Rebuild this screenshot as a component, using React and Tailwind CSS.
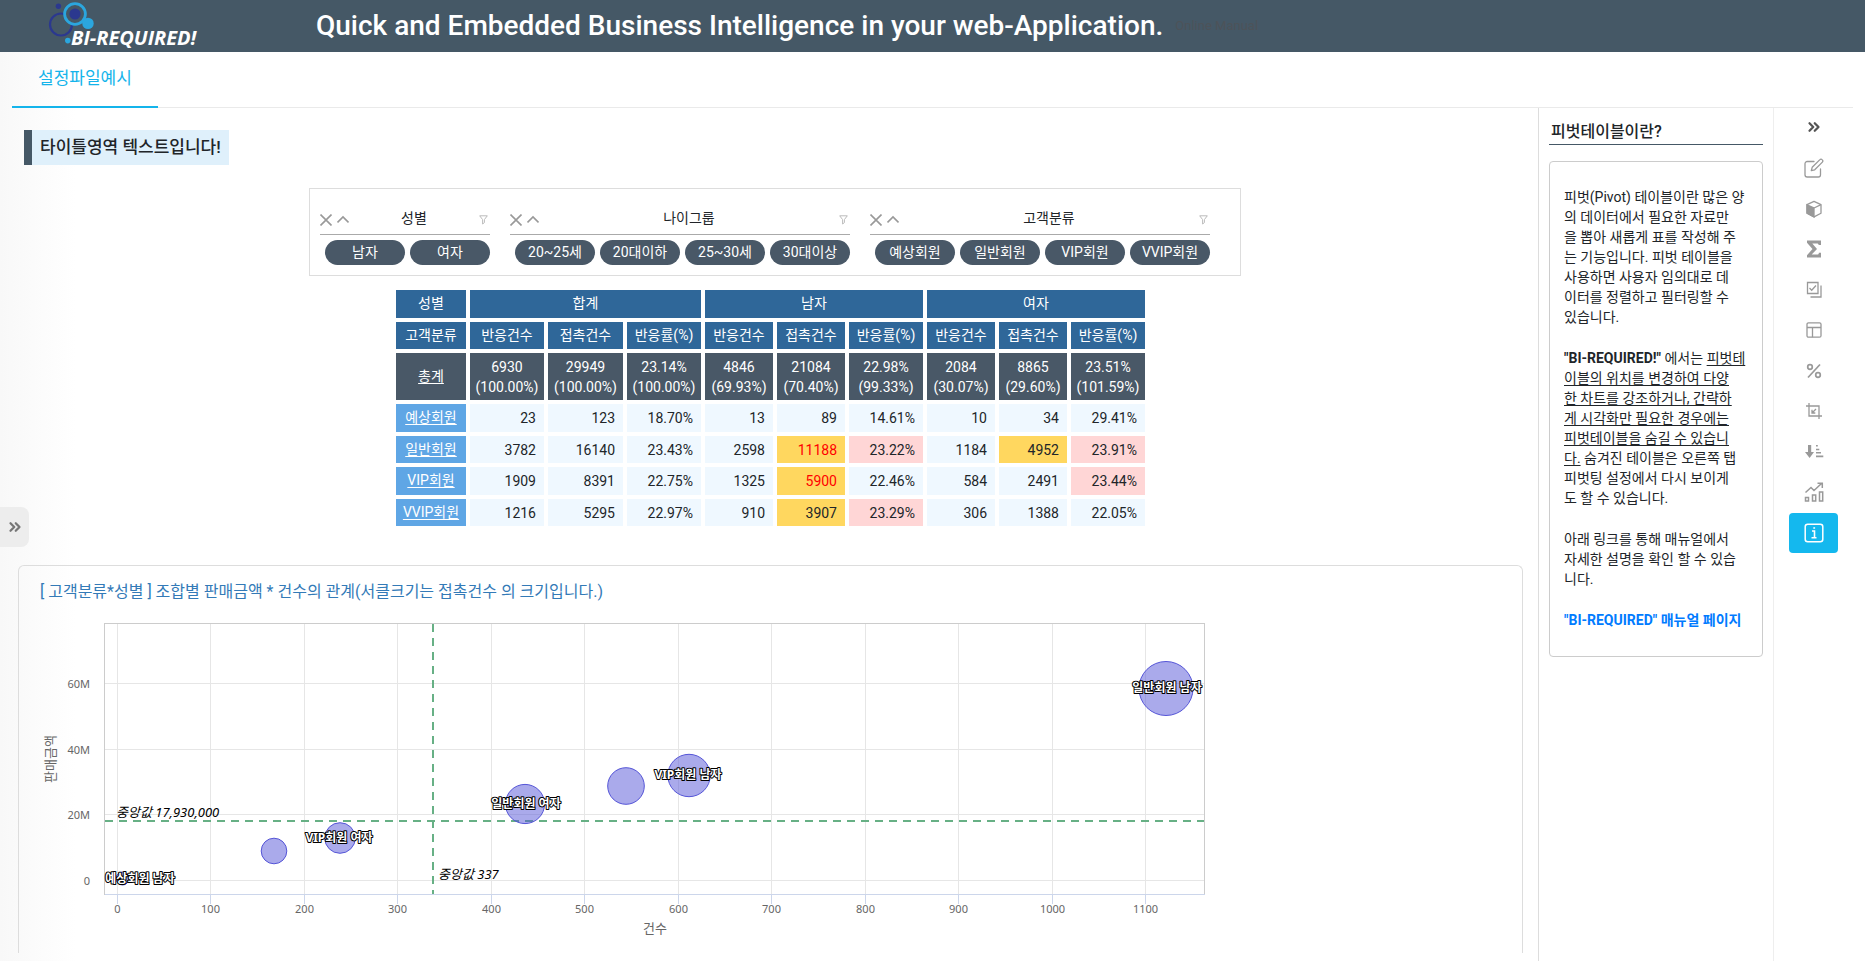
import React from "react";
import { ChevronsRight } from "lucide-react";

const FONT = "font-[Roboto,'Noto_Sans_CJK_KR',sans-serif]";

function Logo() {
  return (
    <svg width="160" height="52" viewBox="40 0 160 52" role="img" aria-label="BI-REQUIRED!">
      <circle cx="61" cy="24.5" r="11" fill="none" stroke="#2b388f" strokeWidth="2.2" />
      <circle cx="75" cy="14" r="10.4" fill="#455866" stroke="#2ba6de" strokeWidth="2.8" />
      <circle cx="75" cy="14" r="5.6" fill="#2b388f" />
      <circle cx="58.4" cy="6.2" r="2.7" fill="#2b388f" />
      <circle cx="88" cy="23.4" r="5.7" fill="#2ba6de" />
      <circle cx="67.8" cy="40.6" r="2.8" fill="#2ba6de" />
      <text x="71" y="45" fontSize="20" fontWeight="700" fontStyle="italic" fill="#fff" className="font-['Open_Sans',sans-serif]">
        BI-REQUIRED!
      </text>
    </svg>
  );
}

const FILTERS = [
  { name: "성별", items: ["남자", "여자"] },
  { name: "나이그룹", items: ["20~25세", "20대이하", "25~30세", "30대이상"] },
  { name: "고객분류", items: ["예상회원", "일반회원", "VIP회원", "VVIP회원"] },
];

function FilterGroup({ name, items }) {
  return (
    <div>
      <div className="flex h-[30px] items-center border-b border-[#aaa] pb-1">
        <div className="mt-1 flex w-[29px] shrink-0 justify-between text-[#999]">
          <button type="button" aria-label={`${name} 삭제`}>
            <svg width="12" height="12" viewBox="0 0 12 12" fill="none" stroke="currentColor" strokeWidth="1.6">
              <path d="M0.5 0.5l11 11M11.500 0.500l-11 11" />
            </svg>
          </button>
          <button type="button" aria-label={`${name} 접기`}>
            <svg width="12" height="12" viewBox="0 0 12 12" fill="none" stroke="currentColor" strokeWidth="1.6">
              <path d="M0.5 8.500 6 3l5.500 5.500" />
            </svg>
          </button>
        </div>
        <span className="flex-1 text-center text-[14px] leading-4 text-[#212529]">{name}</span>
        <button type="button" aria-label={`${name} 필터`} className="mt-1 mr-0.5 text-[#bbb]">
          <svg width="9" height="10" viewBox="0 0 9 10" fill="none" stroke="currentColor">
            <path d="M0.7 0.8h7.6L5.400 4.600v3L3.600 9V4.600z" />
          </svg>
        </button>
      </div>
      <div className="mt-[5px] flex gap-[5px] pl-[5px]">
        {items.map((t) => (
          <button key={t} type="button" className="h-[25px] w-20 rounded-full bg-[#495867] text-[14px] leading-[25px] text-white">
            {t}
          </button>
        ))}
      </div>
    </div>
  );
}

const METRICS = ["반응건수", "접촉건수", "반응률(%)"];
const TOTALS = [
  ["6930", "(100.00%)"], ["29949", "(100.00%)"], ["23.14%", "(100.00%)"],
  ["4846", "(69.93%)"], ["21084", "(70.40%)"], ["22.98%", "(99.33%)"],
  ["2084", "(30.07%)"], ["8865", "(29.60%)"], ["23.51%", "(101.59%)"],
];
const P = "bg-[#ffd6d6]";
const Y = "bg-[#ffd75f]";
const R = "bg-[#ffd75f] text-[#ff0000]";
const N = "bg-[#eff8ff]";
const ROWS = [
  { name: "예상회원", v: ["23", "123", "18.70%", "13", "89", "14.61%", "10", "34", "29.41%"], s: [N, N, N, N, N, N, N, N, N] },
  { name: "일반회원", v: ["3782", "16140", "23.43%", "2598", "11188", "23.22%", "1184", "4952", "23.91%"], s: [N, N, N, N, R, P, N, Y, P] },
  { name: "VIP회원", v: ["1909", "8391", "22.75%", "1325", "5900", "22.46%", "584", "2491", "23.44%"], s: [N, N, N, N, R, N, N, N, P] },
  { name: "VVIP회원", v: ["1216", "5295", "22.97%", "910", "3907", "23.29%", "306", "1388", "22.05%"], s: [N, N, N, N, Y, P, N, N, N] },
];

function PivotTable() {
  return (
    <table className="w-[757px] table-fixed border-separate border-spacing-1 text-[14px] leading-5">
      <colgroup>
        <col className="w-[70px]" />
        <col className="w-[74px]" />
        <col className="w-[75px]" />
        <col className="w-[74px]" />
        <col className="w-[68px]" />
        <col className="w-[68px]" />
        <col className="w-[74px]" />
        <col className="w-[68px]" />
        <col className="w-[68px]" />
        <col className="w-[74px]" />
      </colgroup>
      <thead className="text-white">
        <tr className="h-7">
          <th scope="col" className="bg-[#2f6799] p-0 pb-0.5 font-normal">성별</th>
          {["합계", "남자", "여자"].map((g) => (
            <th key={g} scope="colgroup" colSpan={3} className="bg-[#2f6799] p-0 pb-0.5 font-normal">{g}</th>
          ))}
        </tr>
        <tr className="h-[27px]">
          <th scope="col" className="bg-[#2f6799] p-0 pb-0.5 font-normal">고객분류</th>
          {[0, 1, 2].flatMap((g) =>
            METRICS.map((m) => (
              <th key={g + m} scope="col" className="bg-[#2f6799] p-0 pb-0.5 font-normal whitespace-nowrap">{m}</th>
            ))
          )}
        </tr>
      </thead>
      <tbody>
        <tr className="h-[47px] text-white">
          <th scope="row" className="bg-[#495867] p-0 pb-0.5 font-normal">
            <a href="#total" className="underline underline-offset-2">총계</a>
          </th>
          {TOTALS.map(([a, b], i) => (
            <td key={i} className="bg-[#495867] p-0 text-center">
              {a}
              <br />
              {b}
            </td>
          ))}
        </tr>
        {ROWS.map((r) => (
          <tr key={r.name} className="odd:h-[27px] even:h-7">
            <th scope="row" className="bg-[#5fa6e5] p-0 pb-0.5 font-normal text-white">
              <a href="#row" className="underline underline-offset-2">{r.name}</a>
            </th>
            {r.v.map((v, i) => (
              <td key={i} className={`p-0 pr-2 text-right text-[#212529] ${r.s[i]}`}>{v}</td>
            ))}
          </tr>
        ))}
      </tbody>
    </table>
  );
}

const BUBBLES = [
  { x: 122.5, y: 878.5, r: 6.5, t: "예상회원 남자", tx: 140, ty: 883 },
  { x: 274, y: 851, r: 12.8 },
  { x: 340, y: 838, r: 15.3, t: "VIP회원 여자", tx: 339, ty: 842 },
  { x: 525, y: 804, r: 19.6, t: "일반회원 여자", tx: 526, ty: 808 },
  { x: 626, y: 786, r: 18.3 },
  { x: 689, y: 775.5, r: 21.2, t: "VIP회원 남자", tx: 688, ty: 779 },
  { x: 1166, y: 688.5, r: 27, t: "일반회원 남자", tx: 1167, ty: 692 },
];
const XT = [
  [0, 117.5], [100, 210.5], [200, 304.5], [300, 397.5], [400, 491.5], [500, 584.5],
  [600, 678.5], [700, 771.5], [800, 865.5], [900, 958.5], [1000, 1052.5], [1100, 1145.5],
];
const YT = [["60M", 683.5], ["40M", 749.5], ["20M", 814.5], ["0", 880.5]];

function BubbleChart() {
  return (
    <svg width="1190" height="330" viewBox="40 610 1190 330" className="block font-['Noto_Sans','Noto_Sans_CJK_KR',sans-serif]" role="img" aria-label="고객분류와 성별 조합별 판매금액과 건수의 관계">
      <g stroke="#e6e6e6">
        {XT.map(([v, x]) => <line key={v} x1={x} x2={x} y1="624" y2="894" />)}
        {YT.map(([v, y]) => <line key={v} x1="105" x2="1204" y1={y} y2={y} />)}
      </g>
      <rect x="104.5" y="623.5" width="1100" height="271" fill="none" stroke="#ccc" />
      <g stroke="#ccd6eb">
        <line x1="105" x2="1205" y1="894.5" y2="894.5" />
        {XT.map(([v, x]) => <line key={v} x1={x} x2={x} y1="894" y2="904" />)}
      </g>
      <g stroke="#67b085" strokeWidth="2" strokeDasharray="8 6">
        <line x1="433" x2="433" y1="624" y2="894" />
        <line x1="105" x2="1204" y1="821" y2="821" />
      </g>
      <g fill="#5555d7" fillOpacity="0.5" stroke="#5555d7" strokeWidth="1">
        {BUBBLES.map((b) => <circle key={b.x} cx={b.x} cy={b.y} r={b.r} />)}
      </g>
      <g fontSize="13" fontStyle="italic" fill="#000">
        <text x="116" y="817">중앙값 17,930,000</text>
        <text x="438" y="879">중앙값 337</text>
      </g>
      <g fontSize="12" fontWeight="700" textAnchor="middle" fill="#fff" stroke="#000" strokeWidth="2" strokeLinejoin="round" paintOrder="stroke">
        {BUBBLES.filter((b) => b.t).map((b) => <text key={b.t} x={b.tx} y={b.ty}>{b.t}</text>)}
      </g>
      <g fontSize="11" fill="#666">
        {XT.map(([v, x]) => <text key={v} x={x} y="913" textAnchor="middle">{v}</text>)}
        {YT.map(([v, y]) => <text key={v} x="90" y={y + 4} textAnchor="end">{v}</text>)}
      </g>
      <g fontSize="13" fill="#666" textAnchor="middle">
        <text x="655" y="933">건수</text>
        <text transform="translate(55 759) rotate(-90)">판매금액</text>
      </g>
    </svg>
  );
}

const S = { width: 20, height: 20, viewBox: "0 0 20 20", fill: "none", stroke: "currentColor", strokeWidth: 1.3 };
const TOOLS = [
  { label: "편집", icon: <svg {...S} strokeLinejoin="round" strokeLinecap="round"><path d="M10 3.500H3.200A2.200 2.200 0 0 0 1 5.700v11.100A2.200 2.200 0 0 0 3.200 19h11.100a2.200 2.200 0 0 0 2.200-2.200V11M8.200 9.300l-.9 3.400 3.400-.9 7.700-7.700a1.500 1.500 0 0 0 0-2.200l-.3-.3a1.500 1.500 0 0 0-2.200 0z" /></svg> },
  { label: "큐브", icon: <svg {...S}><path d="M10 2.300 17 5.600v8.600L10 17.900 3 14.200V5.600z" strokeLinejoin="round" /><path d="M3 5.800 10 9v8.900l-7-3.700z" fill="currentColor" /><path d="M10 9l7-3.300" /></svg> },
  { label: "합계", icon: <svg {...S} stroke="none" fill="currentColor"><path d="M3 1.500h14v4.600h-2.400c0-1-.6-1.500-1.600-1.500H8.300L13 10l-5.300 5.600H13c1.200 0 1.900-.6 1.900-1.900H17v4.800H3v-2.200l5.500-6.400L3 3.800z" /></svg> },
  { label: "선택", icon: <svg {...S}><path d="M3.500 2.500h10.500v11H3.500zM17 5.500v11.500H6.500" /><path d="M5.500 8l2.200 2.300 4.300-4.800" /></svg> },
  { label: "레이아웃", icon: <svg {...S}><rect x="3" y="2.800" width="14" height="14.400" rx="1.500" /><path d="M3 7.500h14M8.500 7.500v9.700" /></svg> },
  { label: "비율", icon: <svg {...S} strokeWidth="1.700"><circle cx="6" cy="6" r="2.300" /><circle cx="14" cy="14" r="2.300" /><path d="M16 3.500 4 16.500" /></svg> },
  { label: "자르기", icon: <svg {...S}><path d="M5 2v13h13M2 5h13v13" /><path d="M12 8l-4 4M8 8.800V12h3.300" /></svg> },
  { label: "정렬", icon: <svg {...S} stroke="none" fill="currentColor"><path d="M4 3h3.200v7H10L5.600 16 1 10h3zM12 3h1.800v1.600H12zM12 6.700h3.300v1.600H12zM12 10h5v1.600h-5zM12 13.500h7.300v1.700H12z" /></svg> },
  { label: "차트", icon: <svg {...S} strokeWidth="1.500"><path d="M1.500 15.500h3v3.500h-3zM8.500 13h3.200v6H8.500zM15.500 10h3.200v9h-3.200zM1.500 10.500l5.500-5 3 3 7.500-7M13.500 1.200h4.800V6" /></svg> },
];

function Info() {
  return (
    <div className="mt-4 flex flex-col gap-[21px] rounded-sm border border-[#ccc] px-3.5 pt-[25px] pb-[26px] text-[14px] leading-5 whitespace-nowrap text-[#212529]">
      <p>
        피벗(Pivot) 테이블이란 많은 양<br />의 데이터에서 필요한 자료만<br />을 뽑아 새롭게 표를 작성해 주<br />는 기능입니다. 피벗 테이블을<br />
        사용하면 사용자 임의대로 데<br />이터를 정렬하고 필터링할 수<br />있습니다.
      </p>
      <p>
        <strong className="font-bold">"BI-REQUIRED!"</strong> 에서는{" "}
        <u className="underline-offset-2">
          피벗테<br />이블의 위치를 변경하여 다양<br />한 차트를 강조하거나, 간략하<br />게 시각화만 필요한 경우에는<br />피벗테이블을 숨길 수 있습니<br />다.
        </u>{" "}
        숨겨진 테이블은 오른쪽 탭<br />피벗팅 설정에서 다시 보이게<br />도 할 수 있습니다.
      </p>
      <p>
        아래 링크를 통해 매뉴얼에서<br />자세한 설명을 확인 할 수 있습<br />니다.
      </p>
      <p>
        <a href="#manual" className="font-bold text-[#007bff]">"BI-REQUIRED" 매뉴얼 페이지</a>
      </p>
    </div>
  );
}

export default function App() {
  return (
    <div className={`relative flex min-h-screen flex-col bg-white ${FONT} text-[#212529]`}>
      <header className="flex h-[52px] shrink-0 items-center bg-[#455866] pl-10">
        <Logo />
        <h1 className="ml-[116px] text-[28px] leading-[52px] font-medium whitespace-nowrap text-white">
          Quick and Embedded Business Intelligence in your web-Application.
        </h1>
        <a href="#manual" className="ml-3 text-[13px] text-[#4d5359]">Online Manual</a>
      </header>

      <div className="flex flex-1 flex-col bg-linear-to-r from-[#f8f8f8] to-white to-[76px] pr-3">
        <nav className="ml-3 flex h-14 shrink-0 border-b border-[#eaeaea]">
          <a href="#tab" className="h-14 border-b-2 border-[#14b4eb] px-[26px] text-[17px] leading-[52px] whitespace-nowrap text-[#14b4eb]">
            설정파일예시
          </a>
        </nav>

        <div className="flex flex-1">
          <main className="flex min-w-0 flex-1 flex-col">
            <div className="mt-[22px] ml-6 h-[35px] self-start border-l-8 border-[#455866] bg-[#dff0fb] px-2 text-[17px] leading-[34px] font-medium whitespace-nowrap">
              타이틀영역 텍스트입니다!
            </div>

            <div className="ml-3 flex flex-col items-center">
              <section aria-label="필터" className="mt-[23px] flex w-[932px] gap-5 border border-[#ddd] px-2.5 pt-4 pb-[10px]">
                {FILTERS.map((f) => <FilterGroup key={f.name} {...f} />)}
              </section>
              <div className="mt-2.5 mr-[9px]">
                <PivotTable />
              </div>
            </div>

            <section className="mt-[35px] mr-[15px] mb-2 ml-[18px] flex-1 rounded-t-md border border-b-0 border-[#ddd] pl-[21px]">
              <h2 className="mt-3.5 text-[16px] leading-6 text-[#337ab7]">
                [ 고객분류*성별 ] 조합별 판매금액 * 건수의 관계(서클크기는 접촉건수 의 크기입니다.)
              </h2>
              <div className="mt-1.5">
                <BubbleChart />
              </div>
            </section>
          </main>

          <aside className="w-[235px] shrink-0 border-l border-[#ddd] px-2.5">
            <h2 className="mt-3 border-b border-[#455866] px-0.5 text-[16px] leading-6 font-medium">피벗테이블이란?</h2>
            <Info />
          </aside>

          <aside className="flex w-20 shrink-0 flex-col items-center border-l border-[#eee] text-[#999]">
            <button type="button" aria-label="패널 접기" className="mt-2.5 mb-[13px] flex h-[17px] w-8 items-center justify-center text-[#555]">
              <ChevronsRight size={18} strokeWidth={3} />
            </button>
            <div className="flex h-[405px] flex-col justify-between">
              {TOOLS.map((t) => (
                <button key={t.label} type="button" aria-label={t.label} className="flex h-10 w-[49px] items-center justify-center">
                  {t.icon}
                </button>
              ))}
              <button type="button" aria-label="정보" className="flex h-10 w-[49px] items-center justify-center rounded bg-[#14b8ee] text-white">
                <svg width="20" height="20" viewBox="0 0 20 20" fill="none" stroke="currentColor" strokeWidth="1.500">
                  <rect x="1.200" y="1.200" width="17.600" height="17.600" rx="2.500" />
                  <path d="M8 8h2.500v6.500M7.500 14.800h5M9.300 5h1.800" strokeWidth="1.600" />
                </svg>
              </button>
            </div>
          </aside>
        </div>
      </div>

      <button type="button" aria-label="메뉴 열기" className="absolute top-[507px] left-0 flex h-10 w-[29px] items-center justify-center rounded-r-lg bg-[#ededed] text-[#777]">
        <ChevronsRight size={18} strokeWidth={3} />
      </button>
    </div>
  );
}
